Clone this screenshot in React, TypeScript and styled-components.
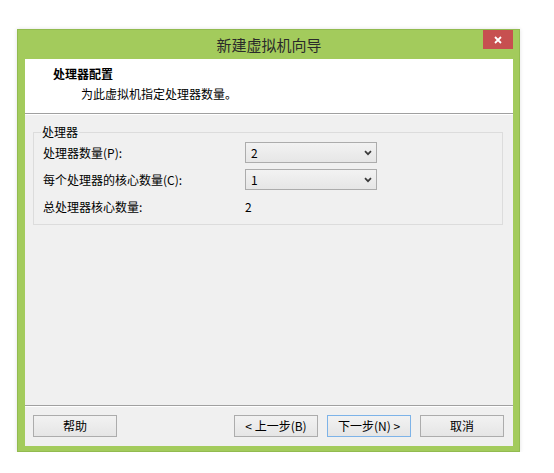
import React from 'react'
import styled, { createGlobalStyle } from 'styled-components'

const GlobalStyle = createGlobalStyle`
  html, body {
    margin: 0;
    padding: 0;
    background: #ffffff;
  }
  body {
    font-family: "Noto Sans CJK SC", "Microsoft YaHei", "Liberation Sans", sans-serif;
    font-size: 12px;
    color: #000;
  }
`

const Page = styled.div`
  padding: 29px 0 0 17px;
`

const Window = styled.div`
  width: 503px;
  height: 423px;
  box-sizing: border-box;
  border: 1px solid #92bb50;
  background: #a3cb5c;
  padding: 0 6px 5px 7px;
  display: flex;
  flex-direction: column;
  box-shadow: 0 0 4px rgba(0, 0, 0, 0.12);
`

const TitleBar = styled.div`
  height: 29px;
  display: grid;
  grid-template-columns: 30px 1fr 30px;
  align-items: center;
`

const TitleText = styled.div`
  grid-column: 2;
  text-align: center;
  font-size: 15px;
  line-height: 20px;
  color: #2a2a2a;
`

const CloseButton = styled.div`
  grid-column: 3;
  align-self: start;
  height: 19px;
  background: #c75050;
  color: #fff;
  display: flex;
  align-items: center;
  justify-content: center;
`

const Client = styled.div`
  flex: 1;
  display: flex;
  flex-direction: column;
  background: #f0f0f0;
`

const Header = styled.div`
  height: 55px;
  box-sizing: border-box;
  padding: 7px 0 0 28px;
  background: #fff;
  border-bottom: 1px solid #a0a0a0;
`

const HeaderTitle = styled.div`
  font-weight: bold;
  line-height: 16px;
`

const HeaderSub = styled.div`
  margin: 4px 0 0 28px;
  line-height: 16px;
`

const Body = styled.div`
  flex: 1;
  padding: 10px 10px 0 8px;
  border-top: 1px solid #fff;
`

const Group = styled.fieldset`
  margin: 0;
  padding: 3px 0 7px 9px;
  border: 1px solid #dcdcdc;
  min-width: 0;
`

const Legend = styled.legend`
  padding: 0 1px;
  margin-left: -2px;
  line-height: 14px;
`

const Rows = styled.div`
  display: grid;
  grid-template-columns: 202px 132px;
  grid-auto-rows: 21px;
  row-gap: 6px;
  align-items: center;
`

const Label = styled.div`
  line-height: 16px;
`

const Combo = styled.div`
  height: 21px;
  box-sizing: border-box;
  border: 1px solid #acacac;
  background: linear-gradient(#f2f2f2, #e6e6e6);
  display: flex;
  align-items: center;
  justify-content: space-between;
  padding: 0 4px 0 5px;
`

const Value = styled.div`
  line-height: 16px;
`

const Footer = styled.div`
  border-top: 1px solid #a0a0a0;
  box-shadow: inset 0 1px 0 #fff;
  padding: 9px 9px 9px 8px;
  display: flex;
  align-items: center;
`

const Spacer = styled.div`
  flex: 1;
`

const Button = styled.div<{ $primary?: boolean }>`
  width: 84px;
  height: 22px;
  box-sizing: border-box;
  border: 1px solid ${(p) => (p.$primary ? '#7db3e8' : '#acacac')};
  background: linear-gradient(#f2f2f2, #e5e5e5);
  display: flex;
  align-items: center;
  justify-content: center;
  line-height: 16px;

  & + & {
    margin-left: 9px;
  }
`

const Chevron = () => (
  <svg width="8" height="6" viewBox="0 0 8 6">
    <path d="M1 1.2 L4 4.2 L7 1.2" fill="none" stroke="#3a3a3a" strokeWidth="1.7" />
  </svg>
)

const CloseIcon = () => (
  <svg width="8" height="8" viewBox="0 0 8 8">
    <path d="M1 1 L7 7 M7 1 L1 7" stroke="#fff" strokeWidth="1.8" />
  </svg>
)

const processorRows = [
  { label: '处理器数量(P):', value: '2', combo: true },
  { label: '每个处理器的核心数量(C):', value: '1', combo: true },
  { label: '总处理器核心数量:', value: '2', combo: false },
]

const App = () => {
  return (
    <Page>
      <GlobalStyle />
      <Window>
        <TitleBar>
          <TitleText>新建虚拟机向导</TitleText>
          <CloseButton>
            <CloseIcon />
          </CloseButton>
        </TitleBar>
        <Client>
          <Header>
            <HeaderTitle>处理器配置</HeaderTitle>
            <HeaderSub>为此虚拟机指定处理器数量。</HeaderSub>
          </Header>
          <Body>
            <Group>
              <Legend>处理器</Legend>
              <Rows>
                {processorRows.map((row) => (
                  <React.Fragment key={row.label}>
                    <Label>{row.label}</Label>
                    {row.combo ? (
                      <Combo>
                        <Value>{row.value}</Value>
                        <Chevron />
                      </Combo>
                    ) : (
                      <Value>{row.value}</Value>
                    )}
                  </React.Fragment>
                ))}
              </Rows>
            </Group>
          </Body>
          <Footer>
            <Button>帮助</Button>
            <Spacer />
            <Button>&lt; 上一步(B)</Button>
            <Button $primary>下一步(N) &gt;</Button>
            <Button>取消</Button>
          </Footer>
        </Client>
      </Window>
    </Page>
  )
}

export default App
